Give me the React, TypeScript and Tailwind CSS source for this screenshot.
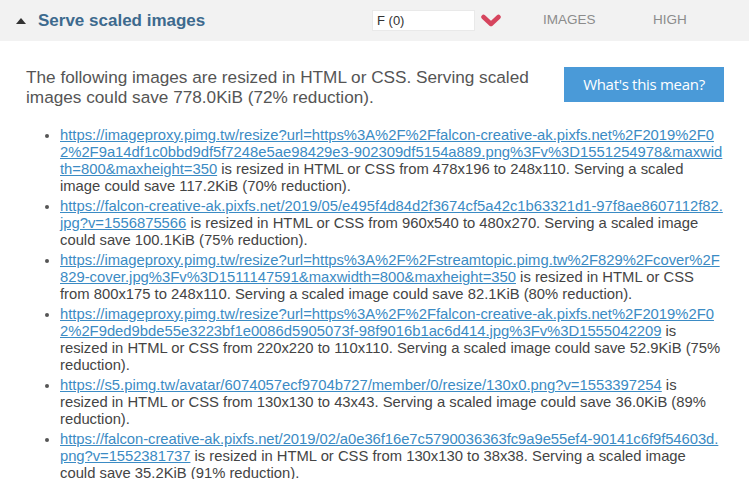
import React from "react";

const items = [
  {
    url: "https://imageproxy.pimg.tw/resize?url=https%3A%2F%2Ffalcon-creative-ak.pixfs.net%2F2019%2F02%2F9a14df1c0bbd9df5f7248e5ae98429e3-902309df5154a889.png%3Fv%3D1551254978&maxwidth=800&maxheight=350",
    text: " is resized in HTML or CSS from 478x196 to 248x110. Serving a scaled image could save 117.2KiB (70% reduction).",
  },
  {
    url: "https://falcon-creative-ak.pixfs.net/2019/05/e495f4d84d2f3674cf5a42c1b63321d1-97f8ae8607112f82.jpg?v=1556875566",
    text: " is resized in HTML or CSS from 960x540 to 480x270. Serving a scaled image could save 100.1KiB (75% reduction).",
  },
  {
    url: "https://imageproxy.pimg.tw/resize?url=https%3A%2F%2Fstreamtopic.pimg.tw%2F829%2Fcover%2F829-cover.jpg%3Fv%3D1511147591&maxwidth=800&maxheight=350",
    text: " is resized in HTML or CSS from 800x175 to 248x110. Serving a scaled image could save 82.1KiB (80% reduction).",
  },
  {
    url: "https://imageproxy.pimg.tw/resize?url=https%3A%2F%2Ffalcon-creative-ak.pixfs.net%2F2019%2F02%2F9ded9bde55e3223bf1e0086d5905073f-98f9016b1ac6d414.jpg%3Fv%3D1555042209",
    text: " is resized in HTML or CSS from 220x220 to 110x110. Serving a scaled image could save 52.9KiB (75% reduction).",
  },
  {
    url: "https://s5.pimg.tw/avatar/6074057ecf9704b727/member/0/resize/130x0.png?v=1553397254",
    text: " is resized in HTML or CSS from 130x130 to 43x43. Serving a scaled image could save 36.0KiB (89% reduction).",
  },
  {
    url: "https://falcon-creative-ak.pixfs.net/2019/02/a0e36f16e7c5790036363fc9a9e55ef4-90141c6f9f54603d.png?v=1552381737",
    text: " is resized in HTML or CSS from 130x130 to 38x38. Serving a scaled image could save 35.2KiB (91% reduction).",
    tight: true,
  },
];

export default function App() {
  return (
    <div className="w-[749px] h-[479px] bg-white overflow-hidden font-['Liberation_Sans',Arial,sans-serif]">
      {/* header row */}
      <div className="h-[41px] bg-[#f2f2f2] flex items-center">
        <span className="ml-[16px] w-0 h-0 border-l-[5px] border-r-[5px] border-b-[6px] border-l-transparent border-r-transparent border-b-[#333]" />
        <h3 className="ml-[12px] w-[334px] text-[17px] font-bold text-[#3d6a8e]">Serve scaled images</h3>
        <div className="w-[103px] h-[21px] bg-white border border-[#e9e9e9] flex items-center pl-[4px] text-[13px] text-[#333]">
          F (0)
        </div>
        <svg className="ml-[6px]" width="20" height="13" viewBox="0 0 20 13">
          <path d="M2.5 3 L10 10 L17.5 3" fill="none" stroke="#d6455e" strokeWidth="4.5" strokeLinecap="round" strokeLinejoin="round" />
        </svg>
        <span className="ml-[42px] w-[110px] text-[13.5px] text-[#8c8c8c]">IMAGES</span>
        <span className="text-[13.5px] text-[#8c8c8c]">HIGH</span>
      </div>

      {/* body */}
      <div className="pl-[26px] pr-[25px] pt-[26px]">
        <div className="flex items-start justify-between">
          <p className="w-[525px] text-[17.2px] leading-[20px] text-[#555]">
            The following images are resized in HTML or CSS. Serving scaled images could save 778.0KiB (72% reduction).
          </p>
          <button className="w-[160px] h-[35px] bg-[#4a9ad8] text-white text-[15px] font-['Open_Sans',sans-serif] tracking-[-0.3px]">
            What's this mean?
          </button>
        </div>

        <ul className="mt-[20px] pl-[34px] pr-[1px] list-disc text-[14.8px] leading-[17px] text-[#444] marker:text-[#555]">
          {items.map((it) => (
            <li key={it.url} className="mb-[3px]">
              <a
                href="#"
                className={`text-[#3b8bc4] underline break-all ${it.tight ? "tracking-[-0.05px]" : ""}`}
              >
                {it.url}
              </a>
              {it.text}
            </li>
          ))}
        </ul>
      </div>
    </div>
  );
}
